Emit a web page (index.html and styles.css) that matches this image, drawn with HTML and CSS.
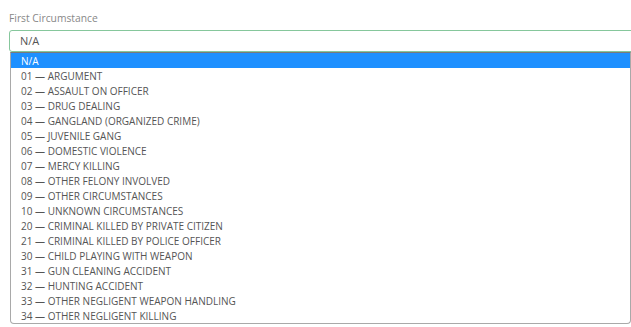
FILE: index.html
```html
<!DOCTYPE html>
<html lang="en">

<head>
    <meta charset="UTF-8">
    <meta name="viewport" content="width=device-width, initial-scale=1.0">
    <title>First Circumstance</title>
    <link rel="stylesheet" href="styles.css">
</head>

<body>
    <div class="field">
        <label class="field-label">First Circumstance</label>
        <div class="select-box">N/A</div>
        <ul class="options">
            <li class="selected">N/A</li>
            <li>01 — ARGUMENT</li>
            <li>02 — ASSAULT ON OFFICER</li>
            <li>03 — DRUG DEALING</li>
            <li>04 — GANGLAND (ORGANIZED CRIME)</li>
            <li>05 — JUVENILE GANG</li>
            <li>06 — DOMESTIC VIOLENCE</li>
            <li>07 — MERCY KILLING</li>
            <li>08 — OTHER FELONY INVOLVED</li>
            <li>09 — OTHER CIRCUMSTANCES</li>
            <li>10 — UNKNOWN CIRCUMSTANCES</li>
            <li>20 — CRIMINAL KILLED BY PRIVATE CITIZEN</li>
            <li>21 — CRIMINAL KILLED BY POLICE OFFICER</li>
            <li>30 — CHILD PLAYING WITH WEAPON</li>
            <li>31 — GUN CLEANING ACCIDENT</li>
            <li>32 — HUNTING ACCIDENT</li>
            <li>33 — OTHER NEGLIGENT WEAPON HANDLING</li>
            <li>34 — OTHER NEGLIGENT KILLING</li>
        </ul>
    </div>
</body>

</html>
```

FILE: styles.css
```css
* {
    margin: 0;
    padding: 0;
    box-sizing: border-box;
}

body {
    font-family: "Open Sans", sans-serif;
    background: #fff;
    overflow: hidden;
}

.field {
    padding: 11px 0 0 9px;
}

.field-label {
    display: block;
    font-size: 10.3px;
    line-height: 14px;
    color: #888;
    margin-bottom: 5px;
}

.select-box {
    width: 640px;
    height: 22px;
    border: 1px solid #86c79c;
    border-radius: 3px;
    padding-left: 10px;
    font-size: 11px;
    line-height: 20px;
    color: #555;
}

.options {
    list-style: none;
    margin: 0 0 0 1px;
    width: 621px;
    border: 1px solid #a9a9a9;
    border-top: 1px solid #7a7a7a;
    border-radius: 0 0 4px 4px;
    background: #fff;
}

.options li {
    height: 15px;
    line-height: 16px;
    padding-left: 10px;
    font-size: 10px;
    color: #555;
    white-space: nowrap;
    overflow: hidden;
}

.options li.selected {
    background: #1e90ff;
    color: #fff;
}
```
